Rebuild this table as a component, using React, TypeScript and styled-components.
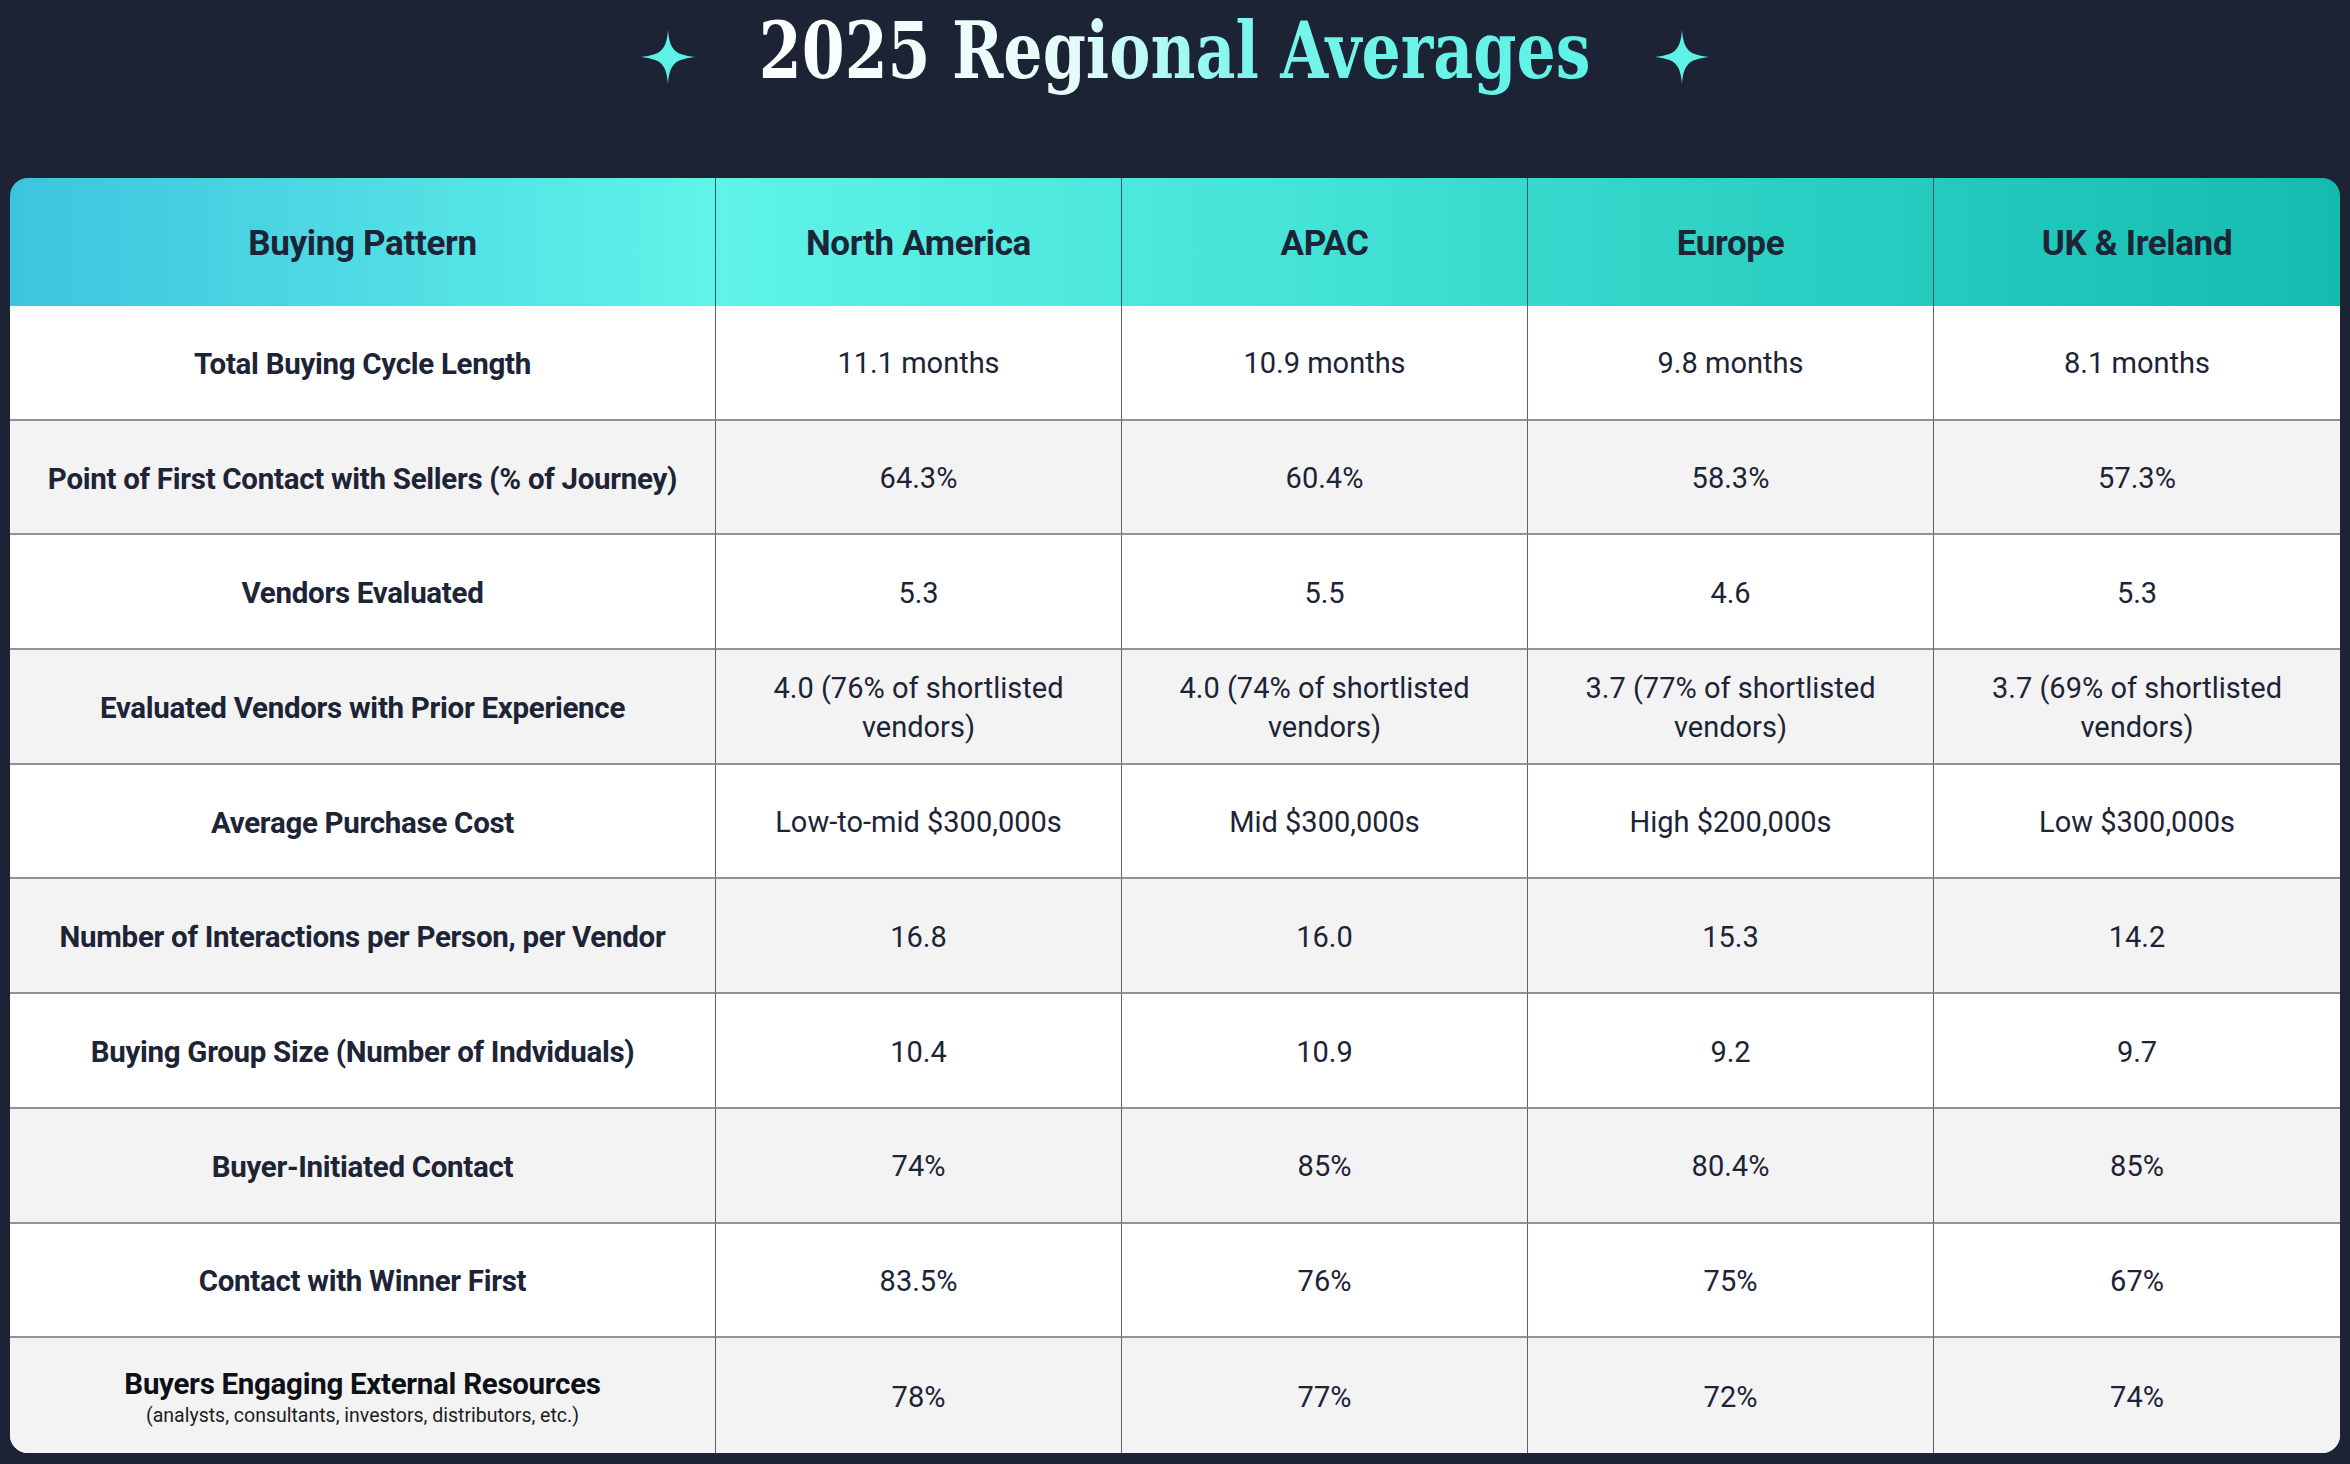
import React from 'react';
import styled, {createGlobalStyle} from "styled-components";

const GlobalStyle = createGlobalStyle`
    html, body {
        margin: 0;
        padding: 0;
        background: #1b2335;
    }
    body {
        font-family: Roboto, "Noto Sans", sans-serif;
    }
`

type RowType = {
    label: string
    note?: string
    values: string[]
}

const regions = ['North America', 'APAC', 'Europe', 'UK & Ireland']

const rows: RowType[] = [
    {label: 'Total Buying Cycle Length', values: ['11.1 months', '10.9 months', '9.8 months', '8.1 months']},
    {label: 'Point of First Contact with Sellers (% of Journey)', values: ['64.3%', '60.4%', '58.3%', '57.3%']},
    {label: 'Vendors Evaluated', values: ['5.3', '5.5', '4.6', '5.3']},
    {
        label: 'Evaluated Vendors with Prior Experience',
        values: ['4.0 (76% of shortlisted vendors)', '4.0 (74% of shortlisted vendors)', '3.7 (77% of shortlisted vendors)', '3.7 (69% of shortlisted vendors)']
    },
    {label: 'Average Purchase Cost', values: ['Low-to-mid $300,000s', 'Mid $300,000s', 'High $200,000s', 'Low $300,000s']},
    {label: 'Number of Interactions per Person, per Vendor', values: ['16.8', '16.0', '15.3', '14.2']},
    {label: 'Buying Group Size (Number of Indviduals)', values: ['10.4', '10.9', '9.2', '9.7']},
    {label: 'Buyer-Initiated Contact', values: ['74%', '85%', '80.4%', '85%']},
    {label: 'Contact with Winner First', values: ['83.5%', '76%', '75%', '67%']},
    {
        label: 'Buyers Engaging External Resources',
        note: '(analysts, consultants, investors, distributors, etc.)',
        values: ['78%', '77%', '72%', '74%']
    },
]

const Sparkle = () => (
    <StarSvg viewBox="0 0 100 100">
        <path d="M50 0 C53 36 62 46 100 50 C62 54 53 64 50 100 C47 64 38 54 0 50 C38 46 47 36 50 0 Z"
              fill="#5ef2e6"/>
    </StarSvg>
)

export default function App() {
    return (
        <Page>
            <GlobalStyle/>
            <Heading>
                <Sparkle/>
                <Title>2025 Regional Averages</Title>
                <Sparkle/>
            </Heading>
            <Table>
                <HeadCell>Buying Pattern</HeadCell>
                {regions.map((r, i) => (
                    <HeadCell key={r} $last={i === regions.length - 1}>{r}</HeadCell>
                ))}
                {rows.map((row, ri) => {
                    const last = ri === rows.length - 1
                    return (
                        <React.Fragment key={row.label}>
                            <LabelCell $shaded={ri % 2 === 1} $bottom={last}>
                                <Label $dark={!!row.note}>{row.label}</Label>
                                {row.note && <Note>{row.note}</Note>}
                            </LabelCell>
                            {row.values.map((v, ci) => (
                                <ValueCell key={ci} $shaded={ri % 2 === 1} $bottom={last}
                                           $last={ci === row.values.length - 1}>
                                    {v}
                                </ValueCell>
                            ))}
                        </React.Fragment>
                    )
                })}
            </Table>
        </Page>
    )
}

const Page = styled.div`
    min-height: 1464px;
    box-sizing: border-box;
    padding: 1px 10px 11px;
    display: flex;
    flex-direction: column;
`

const Heading = styled.header`
    display: flex;
    justify-content: center;
    align-items: center;
    gap: 62px;
    height: 100px;
    margin-bottom: 77px;
`

const StarSvg = styled.svg`
    width: 56px;
    height: 54px;
    flex: none;
    margin-top: 12px;
`

// the condensed serif is still a bit wide, squeeze it to the reference width
const Title = styled.h1`
    margin: 0 -56px;
    font-family: "DejaVu Serif Condensed", "DejaVu Serif", "Liberation Serif", serif;
    font-stretch: condensed;
    font-weight: 700;
    font-size: 78px;
    line-height: 100px;
    white-space: nowrap;
    transform: scaleX(0.88);
    background: linear-gradient(90deg, #ffffff 0%, #e4fcfa 38%, #78f5ec 60%, #5ef2e6 100%);
    -webkit-background-clip: text;
    background-clip: text;
    color: transparent;
`

const Table = styled.div`
    display: grid;
    grid-template-columns: 706px repeat(4, 1fr);
    grid-template-rows: 128px repeat(10, 1fr);
    height: 1275px;
    border-radius: 18px;
    overflow: hidden;
    background: linear-gradient(90deg, #3ec3df 0%, #5ff3e9 30%, #45e3d8 55%, #2ed3c6 72%, #14bcaf 100%) top / 100% 128px no-repeat, #ffffff;
`

const HeadCell = styled.div<{ $last?: boolean }>`
    display: flex;
    align-items: center;
    justify-content: center;
    padding-top: 3px;
    border-right: ${props => props.$last ? 'none' : '1px solid #3d5a66'};
    font-size: 35px;
    font-weight: 700;
    color: #1c2436;
    letter-spacing: -0.01em;
`

const BodyCell = styled.div<{ $shaded: boolean, $bottom: boolean, $last?: boolean }>`
    display: flex;
    flex-direction: column;
    align-items: center;
    justify-content: center;
    text-align: center;
    padding-top: 3px;
    background: ${props => props.$shaded ? '#f3f3f3' : '#ffffff'};
    border-bottom: ${props => props.$bottom ? 'none' : '2px solid #8f939b'};
    border-right: ${props => props.$last ? 'none' : '1px solid #5c6273'};
    color: #1c2436;
`

const LabelCell = styled(BodyCell)`
    padding-left: 20px;
    padding-right: 20px;
`

const Label = styled.div<{ $dark: boolean }>`
    font-size: 29.5px;
    font-weight: 700;
    line-height: 36px;
    letter-spacing: -0.01em;
    color: ${props => props.$dark ? '#0d1017' : '#1c2436'};
`

const Note = styled.div`
    font-size: 19.5px;
    line-height: 27px;
    color: #1a1d24;
`

const ValueCell = styled(BodyCell)`
    padding-left: 30px;
    padding-right: 30px;
    font-size: 29px;
    line-height: 39px;
`
